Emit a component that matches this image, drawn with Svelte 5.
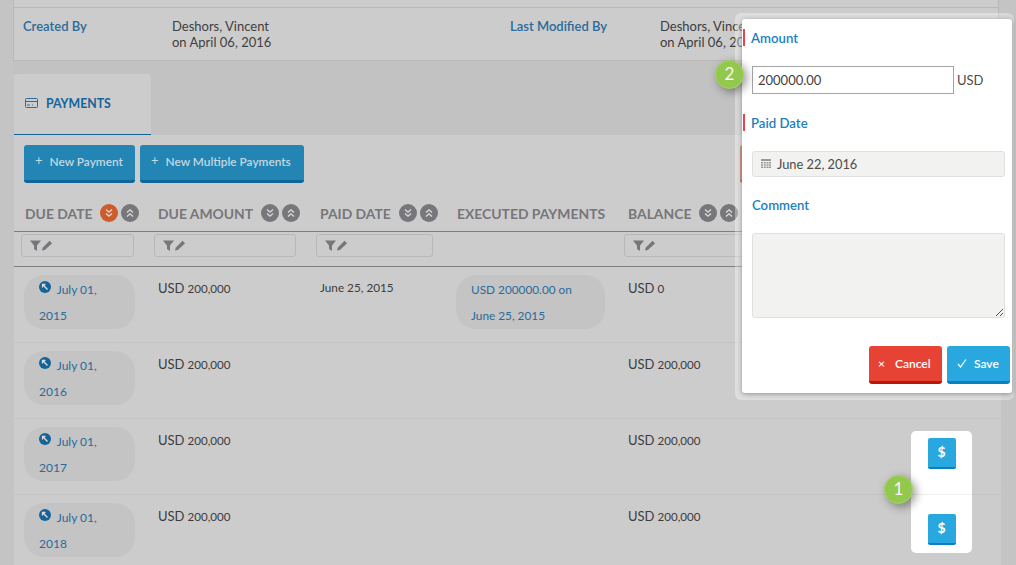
<script>
  const cols = [
    { label: 'Due Date', sort: true, active: true, filter: 113 },
    { label: 'Due Amount', sort: true, filter: 142 },
    { label: 'Paid Date', sort: true, filter: 117 },
    { label: 'Executed Payments' },
    { label: 'Balance', sort: true, filter: 120 }
  ];
  const rows = [
    { due: '2015', paid: 'June 25, 2015', exec: true, balance: '0' },
    { due: '2016', balance: '200,000' },
    { due: '2017', balance: '200,000' },
    { due: '2018', balance: '200,000' }
  ];
</script>

<div class="page">
  <section class="meta">
    <div class="meta-row">
      <div class="meta-label first">Created By</div>
      <div class="meta-value first-v">Deshors, Vincent<br />on April 06, 2016</div>
      <div class="meta-label second">Last Modified By</div>
      <div class="meta-value">Deshors, Vincent<br />on April 06, 2016</div>
    </div>
  </section>

  <nav class="tabs">
    <div class="tab">
      <svg width="13" height="10" viewBox="0 0 13 10" fill="none" stroke="#2b6c9c" stroke-width="1">
        <rect x="0.5" y="0.5" width="12" height="9" rx="1" />
        <path d="M0.5 3.5h12M2 7h3M7 7h1" />
      </svg>
      <span>PAYMENTS</span>
    </div>
  </nav>

  <main class="content">
    <div class="toolbar">
      <button class="btn"><span class="plus">+</span>New Payment</button>
      <button class="btn wide"><span class="plus">+</span>New Multiple Payments</button>
      <div class="btn dim-red"></div>
    </div>

    <div class="thead">
      {#each cols as c}
        <div class="th">
          <span>{c.label}</span>
          {#if c.sort}
            <i class="sort" class:on={c.active}>
              <svg width="10" height="10" viewBox="0 0 10 10" fill="none" stroke="#ddd" stroke-width="1.3"><path d="M2 1.5 5 4.2 8 1.5M2 5.5 5 8.2 8 5.5" /></svg>
            </i>
            <i class="sort second-sort">
              <svg width="10" height="10" viewBox="0 0 10 10" fill="none" stroke="#ddd" stroke-width="1.3"><path d="M2 4.5 5 1.8 8 4.5M2 8.5 5 5.8 8 8.5" /></svg>
            </i>
          {/if}
        </div>
      {/each}
    </div>

    <div class="filters">
      {#each cols as c}
        <div class="fcell">
          {#if c.filter}
            <div class="filter" style="width:{c.filter}px">
              <svg width="23" height="11" viewBox="0 0 23 11" fill="#77767a">
                <path d="M0 .5h11L7 5.500V11L4 9V5.500z" />
                <path d="M12 10.500l.7-2.800L19.500.8l2.600 2.400-7.200 6.700z" />
              </svg>
            </div>
          {/if}
        </div>
      {/each}
    </div>

    {#each rows as r}
      <div class="row">
        <div class="cell">
          <div class="pill">
            <svg class="go" width="12" height="12" viewBox="0 0 12 12">
              <circle cx="6" cy="6" r="6" fill="#14649a" />
              <path d="M3.500 6.500V3.500h3M3.800 3.800 8.500 8.500" fill="none" stroke="#ddd" stroke-width="1.300" />
            </svg>
            <span>July 01,</span> {r.due}
          </div>
        </div>
        <div class="cell"><p class="money"><b>USD</b> 200,000</p></div>
        <div class="cell"><p class="date">{r.paid ?? ''}</p></div>
        <div class="cell">
          {#if r.exec}
            <div class="pill exec">USD 200000.00 on June 25, 2015</div>
          {/if}
        </div>
        <div class="cell"><p class="money"><b>USD</b> {r.balance}</p></div>
      </div>
    {/each}
  </main>

  <div class="spot">
    <button class="dollar">$</button>
    <div class="spot-line"></div>
    <button class="dollar">$</button>
  </div>

  <aside class="popup">
    <div class="pop-inner">
      <div class="lbl req">Amount</div>
      <div class="amount-row">
        <div class="amount-input">200000.00</div>
        <span>USD</span>
      </div>
      <div class="lbl req paid">Paid Date</div>
      <div class="datefield">
        <svg width="10" height="9" viewBox="0 0 10 9" fill="#9a9a9a">
          <path d="M0 0h10v2H0zM0 3h2v1.500H0zM2.800 3h2v1.500h-2zM5.500 3h2v1.500h-2zM8 3h2v1.500H8zM0 5.200h2v1.500H0zM2.800 5.200h2v1.500h-2zM5.500 5.200h2v1.500h-2zM8 5.200h2v1.500H8zM0 7.500h2V9H0zM2.800 7.500h2V9h-2zM5.500 7.500h2V9h-2zM8 7.500h2V9H8z" />
        </svg>
        <span>June 22, 2016</span>
      </div>
      <div class="lbl comment">Comment</div>
      <div class="area">
        <svg width="9" height="9" viewBox="0 0 9 9" stroke="#555" stroke-width="1"><path d="M1 8 8 1M5 8 8 5" /></svg>
      </div>
      <div class="actions">
        <button class="pbtn cancel"><span>×</span>Cancel</button>
        <button class="pbtn save">
          <svg width="10" height="9" viewBox="0 0 10 9" fill="none" stroke="#fff" stroke-width="1.200"><path d="M1 5l2.500 3L9 .5" /></svg>
          Save
        </button>
      </div>
    </div>
  </aside>

  <div class="callout one">1</div>
  <div class="callout two">2</div>
</div>

<style>
  :global(body) { margin: 0; }
  * { box-sizing: border-box; }

  .page {
    position: relative;
    width: 1016px;
    height: 565px;
    overflow: hidden;
    padding: 0 15px 0 13px;
    background: #c4c4c4;
    font-family: Lato, "Open Sans", sans-serif;
    font-size: 13px;
    color: #3c3c3c;
  }

  .meta {
    width: 986px;
    height: 61px;
    padding-top: 7px;
    background: #ccc;
    border-left: 1px solid #b8b8b8;
    border-right: 1px solid #b8b8b8;
    border-bottom: 1px solid #b8b8b8;
  }
  .meta-row {
    display: flex;
    height: 53px;
    padding-top: 10px;
    border-top: 1px solid #b8b8b8;
    font-size: 13px;
    line-height: 16px;
  }
  .meta-label { color: #2a6a9c; font-weight: 600; }
  .first { width: 158px; padding-left: 9px; }
  .first-v { width: 338px; color: #3f3f3f; }
  .second { width: 150px; }

  .tabs { height: 74px; padding: 13px 0 0 1px; background: #c2c2c2; }
  .tab {
    display: flex;
    align-items: center;
    gap: 8px;
    width: 137px;
    height: 61px;
    padding: 0 0 2px 11px;
    background: #ccc;
    border-bottom: 1px solid #14649a;
    border-radius: 3px 3px 0 0;
    color: #14649a;
    font-size: 12.300px;
    font-weight: 700;
  }

  .content { margin-left: 1px; height: 430px; background: #ccc; }
  .toolbar { display: flex; gap: 5px; padding: 10px 0 0 10px; height: 55px; }
  .btn {
    width: 111px;
    height: 38px;
    border: 0;
    border-bottom: 3px solid #0c6699;
    border-radius: 3px;
    background: #2285b3;
    color: #c4d8e2;
    font: 600 11.850px Lato, sans-serif;
    padding: 0 0 4px 11px;
    text-align: left;
    white-space: nowrap;
  }
  .wide { width: 164px; }
  .plus { margin-right: 7px; font-weight: 400; font-size: 13px; position: relative; top: -1px; }
  .dim-red {
    margin-left: 431px;
    width: 80px;
    background: #b8634a;
    border-bottom-color: #9c3a20;
  }

  .thead, .filters, .row {
    display: grid;
    grid-template-columns: 134px 162px 137px 171px 1fr;
  }
  .thead { height: 42px; align-items: center; border-bottom: 1px solid #7e7e7e; padding-top: 5px; }
  .th {
    display: flex;
    align-items: center;
    padding-left: 10px;
    color: #77767a;
    font-size: 13.900px;
    font-weight: 700;
    text-transform: uppercase;
    white-space: nowrap;
  }
  .th span { margin-right: 8px; }
  .th:first-child { padding-left: 11px; }
  .sort {
    display: flex;
    align-items: center;
    justify-content: center;
    flex: none;
    width: 18px;
    height: 18px;
    border-radius: 50%;
    background: #77767a;
  }
  .sort.on { background: #cd5b2b; }
  .second-sort { margin-left: 3px; }

  .filters { height: 35px; padding-top: 2px; border-bottom: 1px solid #7e7e7e; }
  .fcell { padding-left: 6px; }
  .fcell:first-child { padding-left: 7px; }
  .filter {
    height: 23px;
    padding: 5px 0 0 8px;
    border: 1px solid #b8b8b8;
    border-radius: 3px;
  }
  .filter svg { display: block; }

  .row { height: 76px; border-bottom: 1px solid #c4c4c4; }
  .cell { padding: 8px 10px 0; }
  .pill {
    width: 111px;
    height: 54px;
    padding: 2px 15px 0;
    border-radius: 20px;
    background: #c4c4c4;
    color: #2a6a9c;
    font-size: 12px;
    line-height: 26px;
  }
  .go { margin-right: 3px; vertical-align: 1px; }
  .exec { width: 149px; margin-left: -1px; font-size: 11.800px; }
  .money, .date { margin: 0; padding-top: 4px; color: #3c3c3c; font-size: 11.600px; line-height: 18px; }
  .money b { font-weight: 400; font-size: 13px; }
  .date { font-size: 11.750px; }

  .spot {
    position: absolute;
    left: 911px;
    top: 431px;
    width: 61px;
    height: 122px;
    padding-top: 7px;
    background: #fff;
    border-radius: 5px;
    display: flex;
    flex-direction: column;
    align-items: center;
  }
  .dollar {
    width: 28px;
    height: 31px;
    padding: 0 0 2px;
    border: 0;
    border-bottom: 2px solid #0a7fc2;
    border-radius: 2px;
    background: #29a8e0;
    color: #fff;
    font: 700 14px Lato, sans-serif;
  }
  .spot-line { width: 100%; height: 1px; margin: 25px 0 19px; background: #f0f0f0; }

  .popup {
    position: absolute;
    left: 735px;
    top: 13px;
    width: 279px;
    height: 387px;
    padding: 6px 2px 7px 7px;
    background: rgba(255, 255, 255, .35);
    border-radius: 6px;
  }
  .pop-inner {
    position: relative;
    height: 100%;
    padding: 10px 0 0 10px;
    background: #fff;
    border-radius: 3px;
    box-shadow: 0 1px 5px rgba(0, 0, 0, .35);
  }
  .lbl { color: #1b7fc0; font-weight: 600; font-size: 13.200px; line-height: 18px; }
  .req { position: relative; margin-left: -1px; }
  .req::before {
    content: "";
    position: absolute;
    left: -8px;
    top: 0;
    width: 2px;
    height: 17px;
    background: #e8414f;
  }
  .amount-row { display: flex; align-items: center; gap: 3px; margin: 19px 0 0 0; color: #4c4c4c; font-size: 13px; }
  .amount-input {
    width: 202px;
    height: 28px;
    padding: 0 5px;
    border: 1px solid #a4a4a4;
    line-height: 26px;
    color: #3f3f3f;
  }
  .paid { margin-top: 20px; }
  .datefield {
    display: flex;
    align-items: center;
    gap: 6px;
    width: 253px;
    height: 26px;
    margin-top: 19px;
    padding: 0 0 1px 8px;
    background: #f2f2f0;
    border: 1px solid #e0e0e0;
    border-radius: 3px;
    color: #4c4c4c;
    font-size: 12.800px;
  }
  .comment { margin-top: 19px; }
  .area {
    position: relative;
    width: 253px;
    height: 85px;
    margin-top: 19px;
    background: #f2f2f0;
    border: 1px solid #e0e0e0;
    border-radius: 3px;
  }
  .area svg { position: absolute; right: 0; bottom: 0; }
  .actions { display: flex; justify-content: flex-end; gap: 5px; margin: 28px 0 0 0; width: 258px; }
  .pbtn {
    display: flex;
    align-items: center;
    height: 38px;
    padding-bottom: 2px;
    border: 0;
    border-radius: 3px;
    color: #fff;
    font: 600 12px Lato, sans-serif;
  }
  .cancel { width: 73px; padding-left: 9px; gap: 10px; background: #e64335; border-bottom: 3px solid #b8170a; }
  .save { width: 63px; padding-left: 10px; gap: 7px; background: #29a8e0; border-bottom: 3px solid #0a7fc2; }

  .callout {
    position: absolute;
    width: 29px;
    height: 29px;
    border-radius: 50%;
    background: #93c84f;
    border: 1px solid #a5d55f;
    color: #f4f4f4;
    font-size: 17px;
    line-height: 26px;
    text-align: center;
    box-shadow: 3px 3px 10px rgba(0, 0, 0, .4);
  }
  .one { left: 884px; top: 475px; }
  .two { left: 715px; top: 60px; }
</style>
